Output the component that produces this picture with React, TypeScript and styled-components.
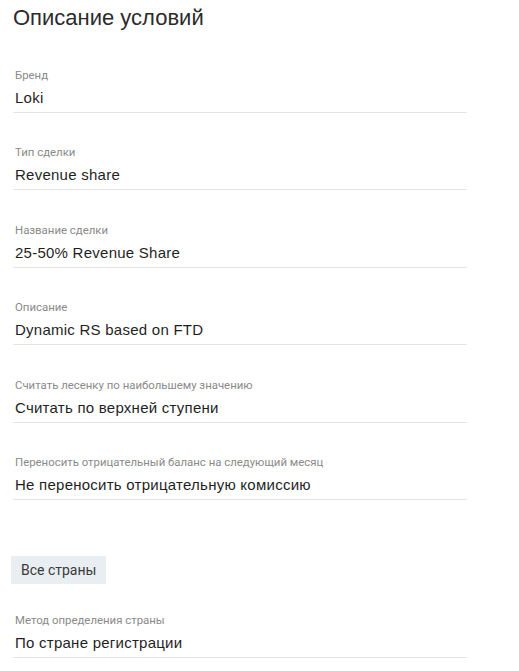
import React from 'react';
import styled, { createGlobalStyle } from 'styled-components';

const GlobalStyle = createGlobalStyle`
  html, body {
    margin: 0;
    padding: 0;
    background: #ffffff;
  }
  body {
    font-family: Roboto, 'Liberation Sans', Arial, sans-serif;
    -webkit-font-smoothing: antialiased;
  }
`;

const Page = styled.div`
  display: flex;
  flex-direction: column;
  align-items: stretch;
  padding: 6px 52px 20px 13px;
`;

const Title = styled.h2`
  margin: 0 0 39px;
  font-family: 'Liberation Sans', Arial, sans-serif;
  font-size: 22px;
  line-height: 24px;
  font-weight: 400;
  color: #2b2b2b;
`;

const Fields = styled.div`
  display: flex;
  flex-direction: column;
  gap: 33.4px;
`;

const Field = styled.div`
  display: flex;
  flex-direction: column;
  border-bottom: 1px solid #e4e4e4;
  padding: 0 2px 4px;
`;

const Label = styled.div`
  font-size: 11.4px;
  line-height: 12px;
  color: #8a8a8a;
  margin-bottom: 7px;
  white-space: nowrap;
`;

const Value = styled.div`
  font-family: 'Liberation Sans', Arial, sans-serif;
  font-size: 15px;
  line-height: 20px;
  letter-spacing: 0.25px;
  color: #1f1f1f;
`;

const Chip = styled.div`
  align-self: flex-start;
  margin: 56px 0 30px -2px;
  height: 28px;
  padding: 0 10px;
  display: flex;
  align-items: center;
  background: #e9eef2;
  font-size: 14px;
  color: #3a3a3a;
`;

const conditions = [
  { label: 'Бренд', value: 'Loki' },
  { label: 'Тип сделки', value: 'Revenue share' },
  { label: 'Название сделки', value: '25-50% Revenue Share' },
  { label: 'Описание', value: 'Dynamic RS based on FTD' },
  { label: 'Считать лесенку по наибольшему значению', value: 'Считать по верхней ступени' },
  { label: 'Переносить отрицательный баланс на следующий месяц', value: 'Не переносить отрицательную комиссию' },
];

const App: React.FC = () => (
  <Page>
    <GlobalStyle />
    <Title>Описание условий</Title>
    <Fields>
      {conditions.map((c) => (
        <Field key={c.label}>
          <Label>{c.label}</Label>
          <Value>{c.value}</Value>
        </Field>
      ))}
    </Fields>
    <Chip>Все страны</Chip>
    <Field>
      <Label>Метод определения страны</Label>
      <Value>По стране регистрации</Value>
    </Field>
  </Page>
);

export default App;
